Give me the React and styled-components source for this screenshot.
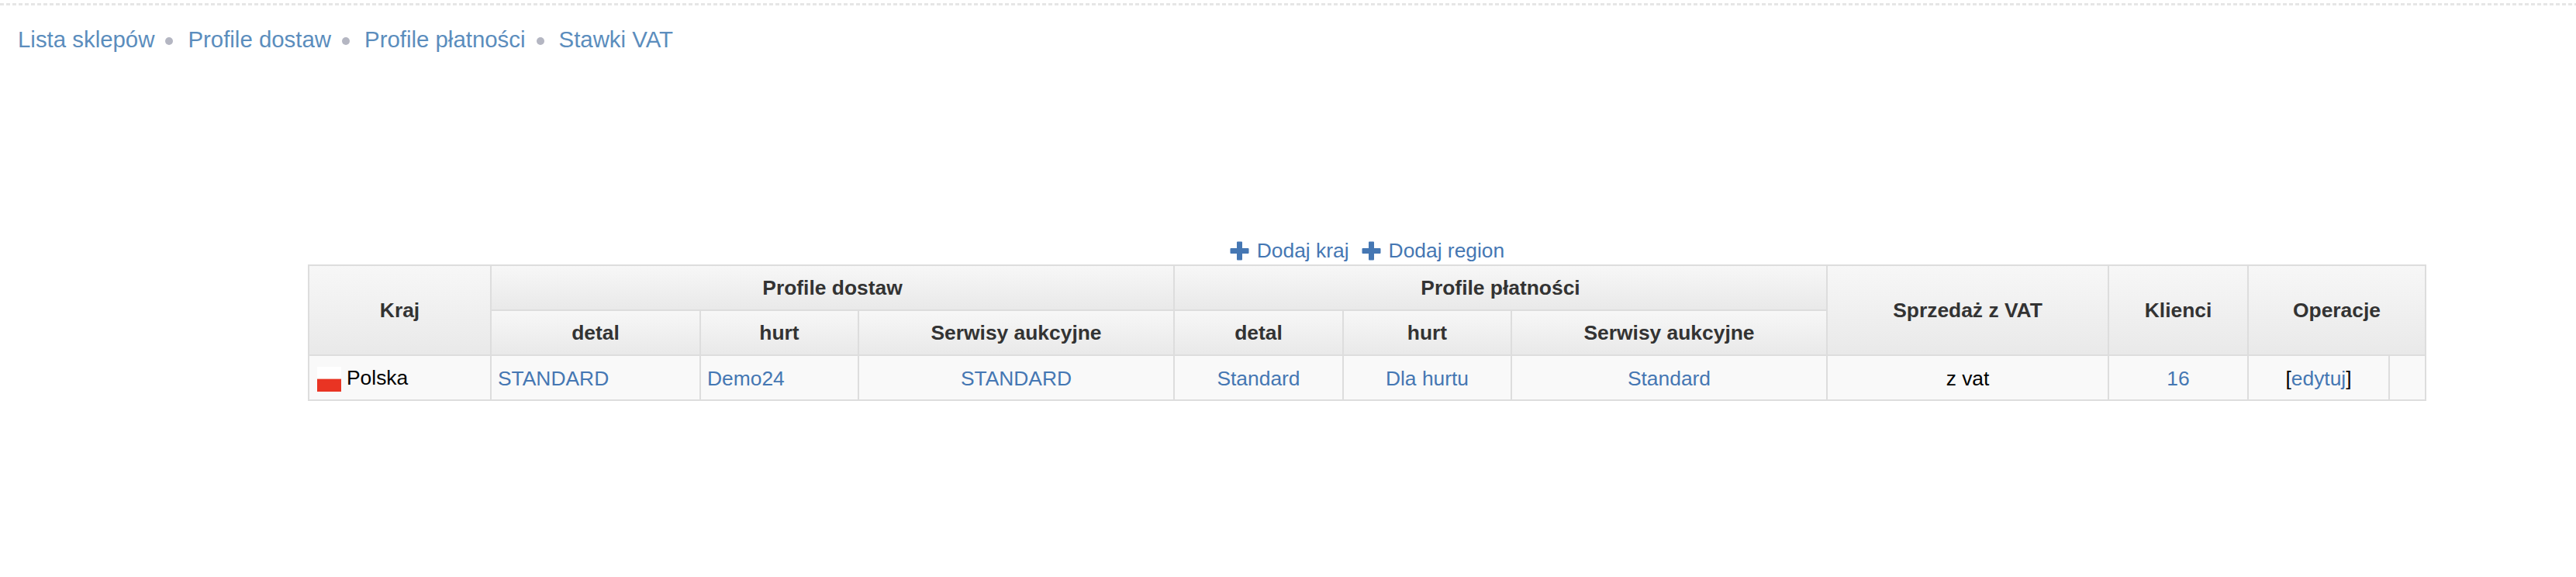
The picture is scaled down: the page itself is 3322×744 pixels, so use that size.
import React from "react";
import styled, { createGlobalStyle } from "styled-components";

const Global = createGlobalStyle`
  html, body { margin: 0; padding: 0; background: #fff; }
  body { font-family: "Liberation Sans", Arial, sans-serif; font-size: 26.4px; color: #000; }
`;

const TopRule = styled.div`
  height: 3px;
  margin-top: 4px;
  background: repeating-linear-gradient(90deg, #e6e6e6 0 5px, #ffffff 5px 8px);
`;

const Crumbs = styled.nav`
  display: flex;
  align-items: center;
  margin: 26px 0 0 23px;
  height: 36px;
  font-size: 29.4px;
`;

const Crumb = styled.a`
  color: #5b8dbd;
  text-decoration: none;
`;

const Dot = styled.span`
  width: 10px;
  height: 10px;
  border-radius: 50%;
  background: #b4b6c2;
  margin: 4px 19px 0 14px;
`;

const Section = styled.section`
  width: 2732px;
  margin: 238px 0 0 397px;
`;

const Actions = styled.div`
  display: flex;
  justify-content: center;
  align-items: center;
  height: 32px;
  gap: 16px;
  margin-bottom: 2px;
`;

const Action = styled.a`
  display: inline-flex;
  align-items: center;
  gap: 10px;
  color: #4577b3;
  text-decoration: none;
`;

const PlusIcon = styled.svg`
  width: 25px;
  height: 25px;
  fill: #4577b3;
`;

const Table = styled.table`
  width: 2732px;
  table-layout: fixed;
  border-collapse: collapse;
  font-size: 26.4px;
`;

const HeadCell = styled.th`
  height: 56px;
  padding: 0 8px;
  border: 2px solid #ddd;
  background: linear-gradient(180deg, #f7f7f7 0%, #e9e9e9 100%);
  color: #333;
  font-weight: 700;
  text-align: center;
`;

const Cell = styled.td`
  height: 54px;
  padding: 2px 8px 0;
  border: 2px solid #ddd;
  background: #f9f9f9;
  text-align: ${(p) => (p.$left ? "left" : "center")};
  white-space: nowrap;
`;

const Link = styled.a`
  color: #4577b3;
  text-decoration: none;
`;

const Flag = styled.span`
  display: inline-block;
  width: 31px;
  height: 32px;
  margin: 0 7px 0 2px;
  vertical-align: -9px;
  background: linear-gradient(180deg, #ffffff 0 15px, #f3b4ab 15px 16px, #e93423 16px 32px);
`;

const widths = [235, 270, 204, 407, 218, 217, 407, 363, 180, 182, 47];

const Plus = () => (
  <PlusIcon viewBox="0 0 25 25" aria-hidden="true">
    <path d="M9 1.5a1 1 0 0 1 1-1h5a1 1 0 0 1 1 1V9h7.5a1 1 0 0 1 1 1v5a1 1 0 0 1-1 1H16v7.5a1 1 0 0 1-1 1h-5a1 1 0 0 1-1-1V16H1.5a1 1 0 0 1-1-1v-5a1 1 0 0 1 1-1H9z" />
  </PlusIcon>
);

export default function App() {
  return (
    <>
      <Global />
      <TopRule />
      <Crumbs>
        <Crumb href="#">Lista sklepów</Crumb>
        <Dot />
        <Crumb href="#">Profile dostaw</Crumb>
        <Dot />
        <Crumb href="#">Profile płatności</Crumb>
        <Dot />
        <Crumb href="#">Stawki VAT</Crumb>
      </Crumbs>
      <Section>
        <Actions>
          <Action href="#"><Plus />Dodaj kraj</Action>
          <Action href="#"><Plus />Dodaj region</Action>
        </Actions>
        <Table>
          <colgroup>
            {widths.map((w, i) => <col key={i} width={w} />)}
          </colgroup>
          <thead>
            <tr>
              <HeadCell rowSpan={2}>Kraj</HeadCell>
              <HeadCell colSpan={3}>Profile dostaw</HeadCell>
              <HeadCell colSpan={3}>Profile płatności</HeadCell>
              <HeadCell rowSpan={2}>Sprzedaż z VAT</HeadCell>
              <HeadCell rowSpan={2}>Klienci</HeadCell>
              <HeadCell rowSpan={2} colSpan={2}>Operacje</HeadCell>
            </tr>
            <tr>
              <HeadCell>detal</HeadCell>
              <HeadCell>hurt</HeadCell>
              <HeadCell>Serwisy aukcyjne</HeadCell>
              <HeadCell>detal</HeadCell>
              <HeadCell>hurt</HeadCell>
              <HeadCell>Serwisy aukcyjne</HeadCell>
            </tr>
          </thead>
          <tbody>
            <tr>
              <Cell $left><Flag />Polska</Cell>
              <Cell $left><Link href="#">STANDARD</Link></Cell>
              <Cell $left><Link href="#">Demo24</Link></Cell>
              <Cell><Link href="#">STANDARD</Link></Cell>
              <Cell><Link href="#">Standard</Link></Cell>
              <Cell><Link href="#">Dla hurtu</Link></Cell>
              <Cell><Link href="#">Standard</Link></Cell>
              <Cell>z vat</Cell>
              <Cell><Link href="#">16</Link></Cell>
              <Cell>[<Link href="#">edytuj</Link>]</Cell>
              <Cell />
            </tr>
          </tbody>
        </Table>
      </Section>
    </>
  );
}
